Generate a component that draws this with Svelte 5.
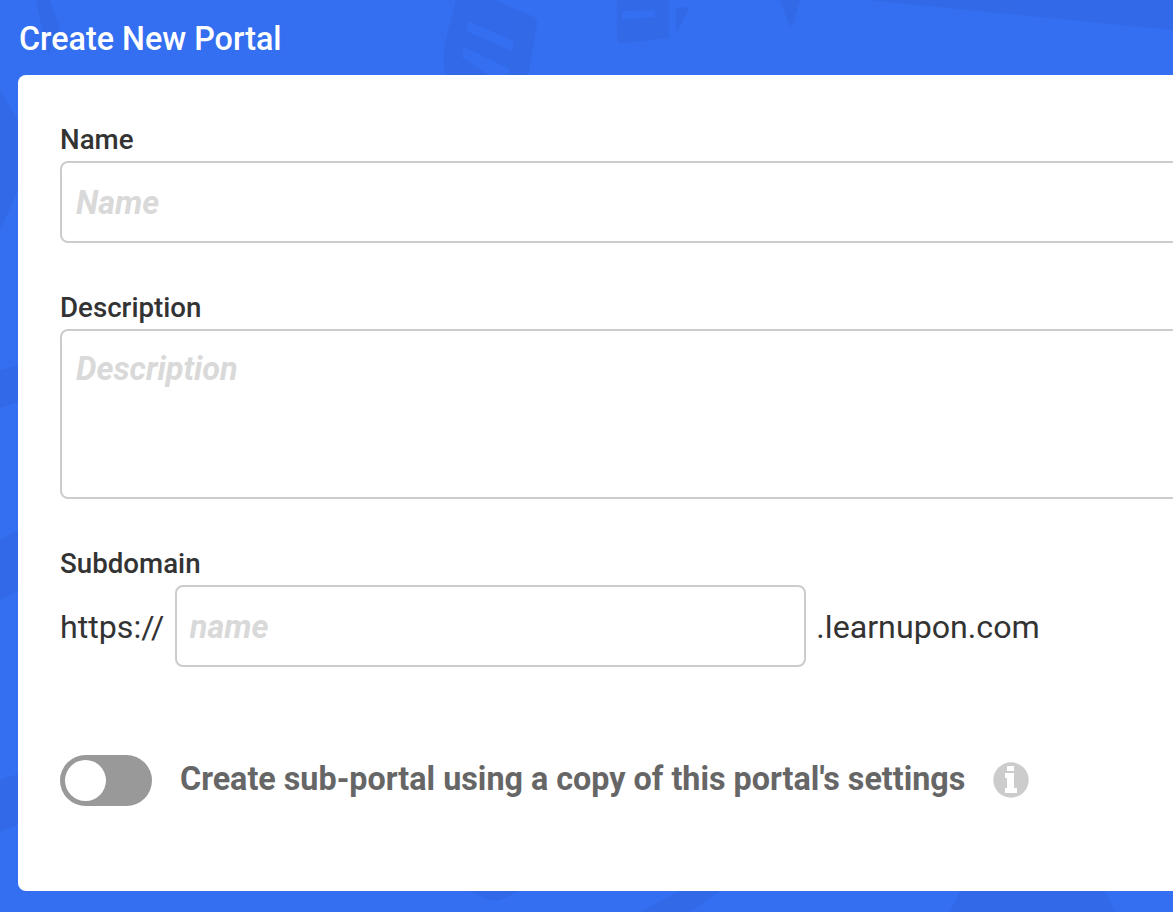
<script>
	let name = $state('');
	let description = $state('');
	let subdomain = $state('');
	let copySettings = $state(false);
</script>

<div class="page">
	<svg class="pattern" width="1173" height="912" viewBox="0 0 1173 912" aria-hidden="true">
		<g fill="#2f62dc" opacity="0.4">
			<path d="M456 0h38l40 17c2 1 3 3 3 7l-9 51h-82c-3-8-3-20-1-32z" />
			<path d="M617 0h52v38l-48 5c-3 0-4-2-4-5z" />
			<path d="M676 8l14-1-14 26z" />
			<path d="M780 0h20l-7 24c-1 2-3 2-4 0z" />
			<path d="M868 0h305v30z" />
			<path d="M36 0h14l10 30-12 25z" />
			<path d="M0 90l18 30v70l-18 40z" />
			<path d="M0 370l18-4v36l-18 6z" />
			<path d="M0 540l18-10v60l-18 10z" />
			<path d="M0 780l18-6v50l-18 8z" />
			<path d="M470 891h50l-18 8c-5 2-10 2-14 0z" />
			<path d="M640 912l40-21h40l-30 21z" />
			<path d="M960 891h145l10 21h-165z" />
		</g>
		<g fill="#336ff0">
			<path d="M468 21l46 20-2 10-46-20z" />
			<path d="M464 47l46 22-2 6h-20l-26-18z" />
			<path d="M622 11l32-1 1 7-33 3z" />
		</g>
	</svg>

	<h1>Create New Portal</h1>

	<form class="card">
		<div class="field">
			<label for="portal-name">Name</label>
			<input id="portal-name" placeholder="Name" bind:value={name} />
		</div>

		<div class="field description">
			<label for="portal-description">Description</label>
			<textarea id="portal-description" placeholder="Description" bind:value={description}></textarea>
		</div>

		<div class="field subdomain">
			<label for="portal-subdomain">Subdomain</label>
			<div class="subdomain-row">
				<span>https://</span>
				<input id="portal-subdomain" placeholder="name" bind:value={subdomain} />
				<span>.learnupon.com</span>
			</div>
		</div>

		<div class="toggle-row">
			<button
				type="button"
				class="toggle"
				class:on={copySettings}
				aria-label="Create sub-portal using a copy of this portal's settings"
				onclick={() => (copySettings = !copySettings)}
			>
				<span class="knob"></span>
			</button>
			<span class="toggle-label">Create sub-portal using a copy of this portal's settings</span>
			<svg class="info" width="36" height="36" viewBox="0 0 36 36" aria-hidden="true">
				<circle cx="18" cy="18" r="17.7" fill="#ccc" />
				<rect x="14" y="4" width="7" height="5" fill="#fff" />
				<path d="M12 11h9v15h3v5h-12v-5h2v-10h-2z" fill="#fff" />
			</svg>
		</div>
	</form>
</div>

<style>
	:global(body) {
		margin: 0;
		font-family: Roboto, 'Liberation Sans', sans-serif;
	}

	.page {
		position: relative;
		box-sizing: border-box;
		width: 1173px;
		height: 912px;
		overflow: hidden;
		background: #336ff0;
	}

	.pattern {
		position: absolute;
		top: 0;
		left: 0;
	}

	h1 {
		position: relative;
		box-sizing: border-box;
		display: flex;
		align-items: center;
		height: 75px;
		margin: 0;
		padding: 2px 0 0 19px;
		color: #fff;
		font-size: 32.3px;
		font-weight: 500;
	}

	.card {
		position: relative;
		box-sizing: border-box;
		width: 1200px;
		height: 816px;
		margin-left: 18px;
		padding: 48px 0 0 42px;
		border-radius: 8px;
		background: #fff;
	}

	.field {
		display: flex;
		flex-direction: column;
	}

	label {
		margin-bottom: 5px;
		color: #333;
		font-size: 27.7px;
		font-weight: 500;
		line-height: 33px;
	}

	input,
	textarea {
		box-sizing: border-box;
		padding: 1px 14px 0;
		border: 2px solid #ccc;
		border-radius: 8px;
		outline: none;
		background: #fff;
		color: #333;
		font-family: inherit;
		font-size: 32.4px;
	}

	input::placeholder,
	textarea::placeholder {
		color: #d9d9d9;
		font-style: italic;
		font-weight: 700;
		opacity: 1;
	}

	.field > input {
		width: 100%;
		height: 82px;
	}

	.description {
		margin-top: 48px;
	}

	textarea {
		display: block;
		width: 100%;
		height: 170px;
		padding-top: 19px;
		resize: none;
	}

	.subdomain {
		margin-top: 48px;
	}

	.subdomain-row {
		display: flex;
		align-items: center;
		gap: 10.5px;
		color: #333;
		font-size: 32.2px;
	}

	.subdomain-row span {
		padding-top: 1px;
	}

	.subdomain-row input {
		width: 631px;
		height: 82px;
		padding: 2px 13px 0;
	}

	.toggle-row {
		display: flex;
		align-items: center;
		margin-top: 88px;
	}

	.toggle {
		display: flex;
		align-items: center;
		box-sizing: border-box;
		width: 92px;
		height: 51px;
		padding: 0 5px;
		border: 0;
		border-radius: 26px;
		background: #999;
		cursor: pointer;
	}

	.toggle.on {
		justify-content: flex-end;
		background: #336ff0;
	}

	.knob {
		width: 41px;
		height: 41px;
		border-radius: 50%;
		background: #fff;
	}

	.toggle-label {
		margin-left: 28px;
		padding-bottom: 3px;
		color: #666;
		font-size: 32.3px;
		font-weight: 700;
	}

	.info {
		margin: 0 0 1px 28px;
	}
</style>
